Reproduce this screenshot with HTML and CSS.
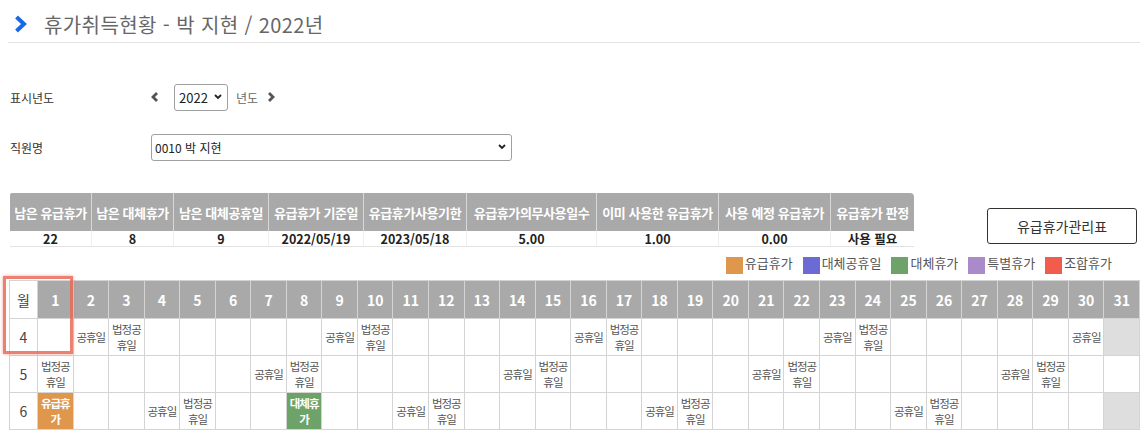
FILE: index.html
```html
<!DOCTYPE html>
<html lang="ko">
<head>
<meta charset="utf-8">
<title>휴가취득현황</title>
<link rel="stylesheet" href="styles.css">
</head>
<body>
<div class="page">
  <div class="title-bar">
    <svg class="title-icon" width="13" height="18" viewBox="0 0 13 18"><polyline points="2.5,2 10,9 2.5,16" fill="none" stroke="#1769e8" stroke-width="4" stroke-linejoin="miter"/></svg>
    <h1 class="title">휴가취득현황 - 박 지현 / 2022년</h1>
  </div>

  <div class="form">
    <div class="form-row">
      <div class="label">표시년도</div>
      <div class="value">
        <svg class="nav-icon" width="8" height="10" viewBox="0 0 8 10"><polyline points="6,1 2,5 6,9" fill="none" stroke="#555" stroke-width="2.8"/></svg>
        <div class="select select-year"><span>2022</span><svg width="8" height="6" viewBox="0 0 8 6"><polyline points="1,1 4,4 7,1" fill="none" stroke="#222" stroke-width="1.8"/></svg></div>
        <span class="unit">년도</span>
        <svg class="nav-icon" width="8" height="10" viewBox="0 0 8 10"><polyline points="2,1 6,5 2,9" fill="none" stroke="#555" stroke-width="2.8"/></svg>
      </div>
    </div>
    <div class="form-row row2">
      <div class="label">직원명</div>
      <div class="value">
        <div class="select select-emp"><span>0010 박 지현</span><svg width="8" height="6" viewBox="0 0 8 6"><polyline points="1,1 4,4 7,1" fill="none" stroke="#222" stroke-width="1.8"/></svg></div>
      </div>
    </div>
  </div>

  <div class="summary-row">
    <table class="summary">
      <colgroup>
        <col style="width:82px"><col style="width:82px"><col style="width:95px"><col style="width:95px"><col style="width:103px"><col style="width:130px"><col style="width:122px"><col style="width:112px"><col style="width:83px">
      </colgroup>
      <thead>
        <tr>
          <th>남은 유급휴가</th><th>남은 대체휴가</th><th>남은 대체공휴일</th><th>유급휴가 기준일</th><th>유급휴가사용기한</th><th>유급휴가의무사용일수</th><th>이미 사용한 유급휴가</th><th>사용 예정 유급휴가</th><th>유급휴가 판정</th>
        </tr>
      </thead>
      <tbody>
        <tr>
          <td>22</td><td>8</td><td>9</td><td>2022/05/19</td><td>2023/05/18</td><td>5.00</td><td>1.00</td><td>0.00</td><td>사용 필요</td>
        </tr>
      </tbody>
    </table>
    <button class="btn" type="button">유급휴가관리표</button>
  </div>

  <div class="legend">
    <div class="legend-item"><span class="sw sw-paid"></span><span>유급휴가</span></div>
    <div class="legend-item"><span class="sw sw-subhol"></span><span>대체공휴일</span></div>
    <div class="legend-item"><span class="sw sw-sub"></span><span>대체휴가</span></div>
    <div class="legend-item"><span class="sw sw-special"></span><span>특별휴가</span></div>
    <div class="legend-item"><span class="sw sw-combo"></span><span>조합휴가</span></div>
  </div>

  <div class="calendar">
    <table class="cal">
      <colgroup><col class="col-month"></colgroup>
      <thead>
        <tr>
          <th class="month-head">월</th>
          <th>1</th><th>2</th><th>3</th><th>4</th><th>5</th><th>6</th><th>7</th><th>8</th><th>9</th><th>10</th>
          <th>11</th><th>12</th><th>13</th><th>14</th><th>15</th><th>16</th><th>17</th><th>18</th><th>19</th><th>20</th>
          <th>21</th><th>22</th><th>23</th><th>24</th><th>25</th><th>26</th><th>27</th><th>28</th><th>29</th><th>30</th><th>31</th>
        </tr>
      </thead>
      <tbody>
        <tr>
          <td class="month">4</td>
          <td></td><td class="nw">공휴일</td><td>법정공<br>휴일</td><td></td><td></td><td></td><td></td><td></td><td class="nw">공휴일</td><td>법정공<br>휴일</td>
          <td></td><td></td><td></td><td></td><td></td><td class="nw">공휴일</td><td>법정공<br>휴일</td><td></td><td></td><td></td>
          <td></td><td></td><td class="nw">공휴일</td><td>법정공<br>휴일</td><td></td><td></td><td></td><td></td><td></td><td class="nw">공휴일</td><td class="none"></td>
        </tr>
        <tr>
          <td class="month">5</td>
          <td>법정공<br>휴일</td><td></td><td></td><td></td><td></td><td></td><td class="nw">공휴일</td><td>법정공<br>휴일</td><td></td><td></td>
          <td></td><td></td><td></td><td class="nw">공휴일</td><td>법정공<br>휴일</td><td></td><td></td><td></td><td></td><td></td>
          <td class="nw">공휴일</td><td>법정공<br>휴일</td><td></td><td></td><td></td><td></td><td></td><td class="nw">공휴일</td><td>법정공<br>휴일</td><td></td><td></td>
        </tr>
        <tr>
          <td class="month">6</td>
          <td class="leave paid">유급휴<br>가</td><td></td><td></td><td class="nw">공휴일</td><td>법정공<br>휴일</td><td></td><td></td><td class="leave sub">대체휴<br>가</td><td></td><td></td>
          <td class="nw">공휴일</td><td>법정공<br>휴일</td><td></td><td></td><td></td><td></td><td></td><td class="nw">공휴일</td><td>법정공<br>휴일</td><td></td>
          <td></td><td></td><td></td><td></td><td class="nw">공휴일</td><td>법정공<br>휴일</td><td></td><td></td><td></td><td></td><td class="none"></td>
        </tr>
      </tbody>
    </table>
    <div class="highlight"></div>
  </div>
</div>
</body>
</html>
```

FILE: styles.css
```css
* { box-sizing: border-box; }

body {
  margin: 0;
  background: #fff;
  color: #333;
  font-family: "Noto Sans CJK KR", "Noto Sans", sans-serif;
}

.page {
  padding: 0 8px;
}

/* title */
.title-bar {
  height: 43px;
  padding-top: 6px;
  padding-left: 6px;
  display: flex;
  align-items: center;
  gap: 17px;
  border-bottom: 1px solid #e3e3e3;
}

.title {
  margin: 0;
  font-size: 20px;
  font-weight: normal;
  color: #666;
  letter-spacing: 0.4px;
}

/* form */
.form {
  margin-top: 40px;
}

.form-row {
  display: flex;
  align-items: center;
  height: 28px;
}

.form-row.row2 {
  margin-top: 22px;
}

.label {
  width: 143px;
  padding-left: 2px;
  font-size: 12px;
  color: #333;
}

.value {
  display: flex;
  align-items: center;
}

.nav-icon {
  display: block;
}

.select {
  display: flex;
  align-items: center;
  justify-content: space-between;
  border: 1px solid #a0a0a0;
  border-radius: 3px;
  background: #fff;
  font-size: 13px;
  color: #222;
}

.select-year {
  width: 54px;
  height: 27px;
  margin-left: 15px;
  padding: 0 5px 0 4px;
}

.select-emp {
  width: 361px;
  height: 27px;
  padding: 0 5px 0 3px;
  font-size: 12px;
}

.unit {
  margin: 0 9px 0 8px;
  font-size: 12px;
  color: #666;
}

/* summary */
.summary-row {
  margin-top: 32px;
  display: flex;
  justify-content: space-between;
  align-items: flex-start;
  padding-left: 2px;
}

.summary {
  border-collapse: separate;
  border-spacing: 0;
  table-layout: fixed;
  width: 904px;
}

.summary th {
  height: 38px;
  padding: 0;
  background: #a9a9a9;
  color: #fff;
  font-size: 13px;
  font-weight: bold;
  white-space: nowrap;
  border-right: 1px solid #d8d8d8;
  letter-spacing: -0.4px;
}

.summary th:last-child {
  border-right: none;
  border-top-right-radius: 4px;
}

.summary th:first-child {
  border-top-left-radius: 2px;
}

.summary td {
  height: 16px;
  padding: 0;
  font-size: 12.5px;
  line-height: 15px;
  font-weight: bold;
  color: #222;
  text-align: center;
  border-right: 1px solid #eee;
  border-bottom: 1px solid #e2e2e2;
}

.summary td:last-child {
  border-right: none;
}

.btn {
  width: 150px;
  height: 36px;
  margin-top: 15px;
  margin-right: 3px;
  border: 1px solid #333;
  border-radius: 3px;
  background: #fff;
  font-family: inherit;
  font-size: 14px;
  color: #333;
}

/* legend */
.legend {
  margin-top: 9px;
  padding-right: 28px;
  display: flex;
  justify-content: flex-end;
  gap: 10px;
}

.legend-item {
  display: flex;
  align-items: flex-start;
  gap: 2px;
  font-size: 13px;
  line-height: 14px;
  color: #555;
}

.sw {
  display: block;
  width: 17px;
  height: 17px;
  margin-top: 1px;
}

.sw-paid { background: #df974d; }
.sw-subhol { background: #6b6bd3; }
.sw-sub { background: #6da269; }
.sw-special { background: #aa8bca; }
.sw-combo { background: #f25c4c; }

/* calendar */
.calendar {
  position: relative;
  margin-top: 6px;
  margin-left: 1px;
}

.cal {
  border-collapse: collapse;
  table-layout: fixed;
  width: 1131px;
}

.col-month {
  width: 28px;
}

.cal th {
  height: 38px;
  padding: 0;
  background: #a9a9a9;
  color: #fff;
  font-size: 14px;
  font-weight: bold;
  border: 1px solid #d4d4d4;
}

.cal th.month-head {
  background: #fff;
  color: #444;
  font-weight: normal;
}

.cal td {
  height: 37px;
  padding: 0;
  border: 1px solid #d4d4d4;
  font-size: 11.5px;
  line-height: 16px;
  color: #555;
  text-align: center;
  letter-spacing: -1px;
}

.cal td.nw {
  white-space: nowrap;
}

.cal td.month {
  font-size: 14px;
  color: #444;
  letter-spacing: 0;
}

.cal td.none {
  background: #dedede;
}

.cal td.leave {
  color: #fff;
  font-weight: bold;
}

.cal td.paid { background: #df974d; }
.cal td.sub { background: #6da269; }

.highlight {
  position: absolute;
  left: -6px;
  top: -4px;
  width: 70px;
  height: 78px;
  border: 3px solid rgba(232, 108, 88, 0.85);
  box-shadow: 0 0 3px rgba(232, 108, 88, 0.6);
  pointer-events: none;
}
```
